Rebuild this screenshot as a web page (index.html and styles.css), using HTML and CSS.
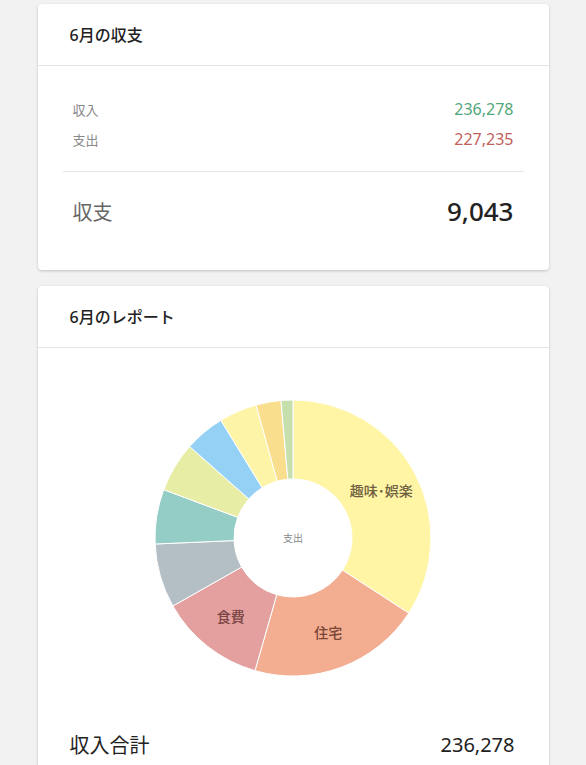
FILE: index.html
```html
<!DOCTYPE html>
<html lang="ja">

<head>
  <meta charset="UTF-8">
  <meta name="viewport" content="width=device-width, initial-scale=1" />
  <title>家計簿</title>
  <link rel="stylesheet" href="styles.css">
</head>

<body>
  <section class="card">
    <h2 class="card-title">6月の収支</h2>
    <div class="balance">
      <div class="balance-row">
        <span class="balance-label">収入</span>
        <span class="balance-value income">236,278</span>
      </div>
      <div class="balance-row">
        <span class="balance-label">支出</span>
        <span class="balance-value expense">227,235</span>
      </div>
      <div class="balance-total">
        <span class="total-label">収支</span>
        <span class="total-value">9,043</span>
      </div>
    </div>
  </section>

  <section class="card">
    <h2 class="card-title">6月のレポート</h2>
    <div class="report">
      <div class="donut">
        <svg id="donut" viewBox="-140 -140 280 280"></svg>
        <span class="donut-center">支出</span>
      </div>
      <div class="sum-row">
        <span>収入合計</span>
        <span>236,278</span>
      </div>
    </div>
  </section>

  <script>
    // degrees from 12 o'clock, clockwise
    const slices = [
      { from: 0, to: 123, color: '#fff5a5', label: '趣味･娯楽', text: '#6e6040' },
      { from: 123, to: 196, color: '#f3ae92', label: '住宅', text: '#7a4535' },
      { from: 196, to: 240.5, color: '#e3a09f', label: '食費', text: '#7a4444' },
      { from: 240.5, to: 267.5, color: '#b3bfc4' },
      { from: 267.5, to: 290.5, color: '#94cdc5' },
      { from: 290.5, to: 311.5, color: '#e8eda5' },
      { from: 311.5, to: 328.5, color: '#94d1f4' },
      { from: 328.5, to: 344.5, color: '#fef4a8' },
      { from: 344.5, to: 355, color: '#f9df8d' },
      { from: 355, to: 360, color: '#c5e0ad' },
    ];

    const R = 138;
    const r = 59;
    const $svg = document.querySelector('#donut');
    const ns = 'http://www.w3.org/2000/svg';

    function pt(rad, deg) {
      const a = (deg - 90) * Math.PI / 180;
      return [rad * Math.cos(a), rad * Math.sin(a)];
    }

    for (const s of slices) {
      const large = s.to - s.from > 180 ? 1 : 0;
      const [x1, y1] = pt(R, s.from);
      const [x2, y2] = pt(R, s.to);
      const [x3, y3] = pt(r, s.to);
      const [x4, y4] = pt(r, s.from);

      const $path = document.createElementNS(ns, 'path');
      $path.setAttribute('d',
        `M${x1},${y1} A${R},${R} 0 ${large} 1 ${x2},${y2} ` +
        `L${x3},${y3} A${r},${r} 0 ${large} 0 ${x4},${y4} Z`);
      $path.setAttribute('fill', s.color);
      $path.setAttribute('class', 'slice');
      $svg.appendChild($path);

      if (s.label) {
        const mid = (s.from + s.to) / 2;
        const [lx, ly] = pt((R + r) / 2 + 2, mid);
        const $text = document.createElementNS(ns, 'text');
        $text.setAttribute('x', lx);
        $text.setAttribute('y', ly);
        $text.setAttribute('fill', s.text);
        $text.setAttribute('class', 'slice-label');
        $text.textContent = s.label;
        $svg.appendChild($text);
      }
    }
  </script>
</body>

</html>
```

FILE: styles.css
```css
:root {
  --color-bg: #f2f2f2;
  --color-card: #fff;
  --color-line: #e6e6e6;
  --color-text: #222;
  --color-sub: #888;
  --color-income: #52a77a;
  --color-expense: #bf5f5d;
}

* {
  margin: 0;
  padding: 0;
  box-sizing: border-box;
}

body {
  padding: 4px 0 0;
  background-color: var(--color-bg);
  font-family: "Noto Sans", "Noto Sans CJK JP", sans-serif;
  color: var(--color-text);

  display: flex;
  flex-direction: column;
  align-items: center;
  gap: 16px;
}

.card {
  width: 511px;
  background-color: var(--color-card);
  border-radius: 4px;
  box-shadow: 0 1px 3px rgba(0, 0, 0, 0.2);
}

.card-title {
  height: 62px;
  padding: 0 32px;
  border-bottom: 1px solid var(--color-line);
  font-size: 16px;
  font-weight: 500;
  line-height: 62px;
}

.balance {
  padding: 28px 25px 32px;
}

.balance-row {
  height: 30px;
  padding: 0 10px;

  display: flex;
  align-items: center;
  justify-content: space-between;
}

.balance-label {
  font-size: 13px;
  color: var(--color-sub);
}

.balance-value {
  font-size: 16px;
}

.balance-value.income {
  color: var(--color-income);
}

.balance-value.expense {
  color: var(--color-expense);
}

.balance-total {
  height: 50px;
  margin-top: 17px;
  padding: 0 10px;
  border-top: 1px solid var(--color-line);
  box-sizing: content-box;
  padding-top: 14px;
  padding-bottom: 2px;

  display: flex;
  align-items: center;
  justify-content: space-between;
}

.total-label {
  font-size: 20px;
  color: #666;
}

.total-value {
  font-size: 26px;
  font-weight: 500;
}

.report {
  padding: 50px 32px 20px;

  display: flex;
  flex-direction: column;
  align-items: center;
  gap: 52px;
}

.donut {
  position: relative;
  width: 280px;
  height: 280px;

  svg {
    width: 100%;
    height: 100%;
    display: block;
  }

  .slice {
    stroke: #fff;
    stroke-width: 1;
  }

  .slice-label {
    font-size: 14px;
    font-weight: 500;
    text-anchor: middle;
    dominant-baseline: central;
  }
}

.donut-center {
  position: absolute;
  top: 50%;
  left: 50%;
  transform: translate(-50%, -52%);
  font-size: 10px;
  color: #888;
}

.sum-row {
  width: 100%;
  padding: 0 2px 0 0;
  font-size: 20px;

  display: flex;
  align-items: center;
  justify-content: space-between;
}
```
